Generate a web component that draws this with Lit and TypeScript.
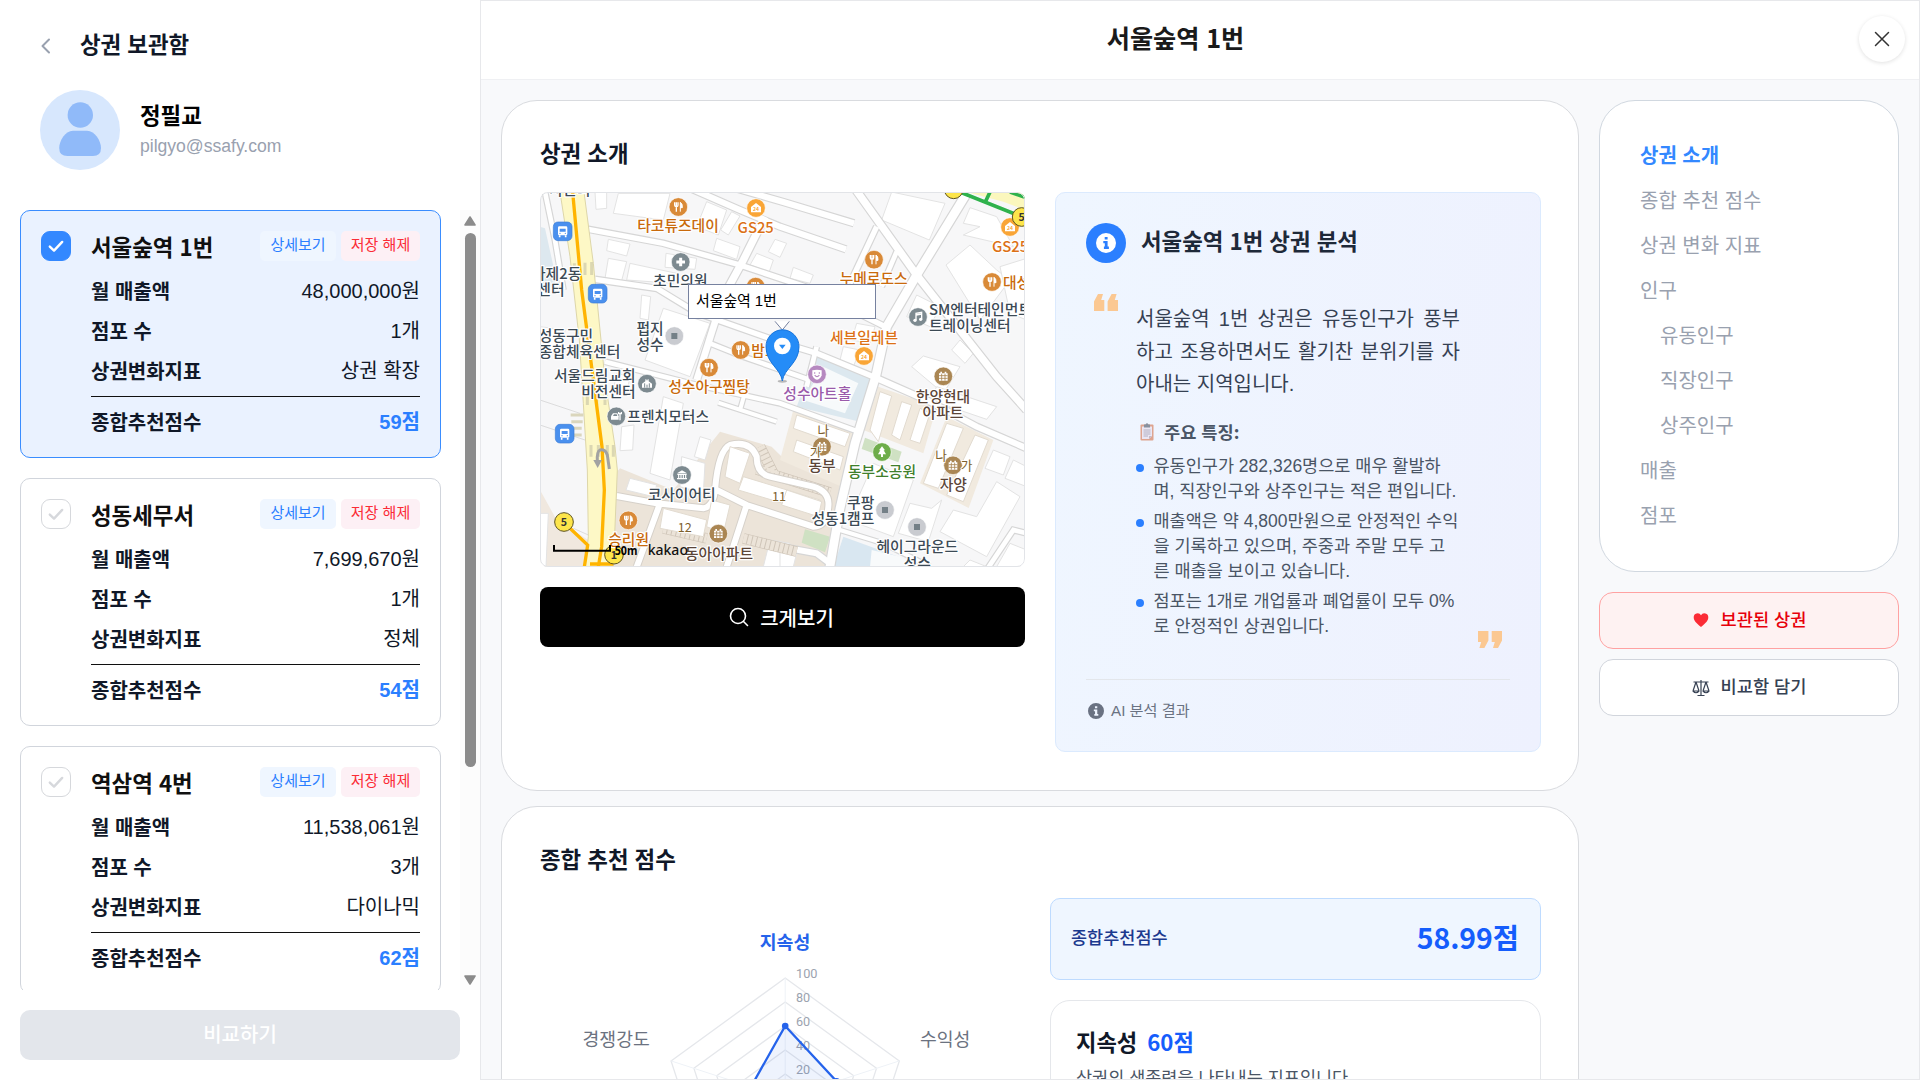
import { LitElement, html, svg, css } from "lit";
import { customElement } from "lit/decorators.js";
import { classMap } from "lit/directives/class-map.js";

interface Area { name: string; sales: string; shops: string; change: string; score: string; on: boolean; }

const AREAS: Area[] = [
  { name: "서울숲역 1번", sales: "48,000,000원", shops: "1개", change: "상권 확장", score: "59점", on: true },
  { name: "성동세무서", sales: "7,699,670원", shops: "1개", change: "정체", score: "54점", on: false },
  { name: "역삼역 4번", sales: "11,538,061원", shops: "3개", change: "다이나믹", score: "62점", on: false },
];

const NAV = [
  { t: "상권 소개", on: true }, { t: "종합 추천 점수" }, { t: "상권 변화 지표" }, { t: "인구" },
  { t: "유동인구", sub: true }, { t: "직장인구", sub: true }, { t: "상주인구", sub: true },
  { t: "매출" }, { t: "점포" },
] as { t: string; on?: boolean; sub?: boolean }[];

const POINTS = [
  ["유동인구가 282,326명으로 매우 활발하", "며, 직장인구와 상주인구는 적은 편입니다."],
  ["매출액은 약 4,800만원으로 안정적인 수익", "을 기록하고 있으며, 주중과 주말 모두 고", "른 매출을 보이고 있습니다."],
  ["점포는 1개로 개업률과 폐업률이 모두 0%", "로 안정적인 상권입니다."],
];

/* Map geometry uses three units per pixel. */
const ROADS: [number, string][] = [
  [14, "M45 36L75 180L100 330"],
  [16, "M175 148L400 190L630 255L830 322L1065 440"],
  [18, "M470 20L630 90L750 140L948 208"],
  [18, "M600 20L760 66L972 130"],
  [22, "M705 110L640 240L580 350"],
  [16, "M195 298L380 325L500 398L760 490L860 520L1030 590"],
  [20, "M560 410L500 600"],
  [14, "M225 545L480 610L750 670L985 755"],
  [14, "M540 490L640 530L840 600"],
  [12, "M565 668L740 725M630 690L650 620"],
  [22, "M978 30L1160 285L1400 590L1490 690"],
  [26, "M1310 40L1160 285L1070 440L1037 590L975 790L930 985L898 1170"],
  [16, "M1040 140L960 310"],
  [14, "M1100 215L1055 320"],
  [18, "M1030 590L1200 665L1340 740L1490 805"],
  [14, "M860 500L830 620"],
  [12, "M930 1050L1060 1090L1200 1160"],
  [14, "M1490 1060L1450 1050L1370 1170"],
  [18, "M750 1100L860 1120L900 1150"],
];
const BUILDINGS = [
  "M195 36H230V85L198 88Z", "M265 40H420L400 120L250 100Z", "M530 65L590 90L565 165L500 140Z", "M605 95L630 108L595 165L572 150Z",
  "M560 175L630 200L620 238L550 212Z", "M735 178L770 190L750 232L715 215Z", "M680 220L730 240L718 275L660 255Z",
  "M235 178L300 192L290 228L230 212Z", "M235 235L290 245L275 302L225 295Z", "M300 250L440 280L430 310L290 300Z", "M408 220L500 235L495 268L405 262Z",
  "M335 345L362 350L355 420L330 415Z", "M400 385L540 430L480 590L345 540Z", "M260 580L300 590L290 640L250 630Z", "M275 740L312 735L308 810L270 812Z",
  "M400 650L460 670L420 900L360 880Z", "M510 770L543 780L525 840L493 830Z", "M455 830L525 850L520 940L450 920Z", "M300 895L380 915L370 950L288 930Z",
  "M1085 36L1245 70L1198 180L1055 120Z", "M1320 83L1400 110L1450 200L1300 165L1350 140L1300 130Z", "M1320 195L1400 270L1440 300L1350 420L1248 255Z",
  "M1410 260L1490 235V420L1440 400Z", "M1160 345L1230 380L1200 440L1130 410Z", "M1290 480L1330 520L1305 550L1265 510Z", "M1180 528L1290 560L1240 640L1145 560Z",
  "M980 430L1035 440L1020 490L965 480Z", "M790 262L850 285L840 310L780 295Z", "M940 500L990 510L970 560L930 540Z", "M1220 620L1400 680L1370 718L1200 660Z",
  "M1400 905L1470 950L1370 1130L1230 1055L1270 990L1340 1010Z", "M1140 970L1205 985L1235 960L1195 1085L1105 1060Z", "M1030 850L1150 900L1090 1070L955 1020Z",
  "M1390 810L1440 830L1420 885L1365 865Z", "M1450 840L1490 860V920L1425 895Z", "M720 1080L780 1090V1160H700Z", "M30 440L105 450L95 520H30Z", "M30 1000L55 1000L48 1160H30Z",
  "M1320 1140L1370 1160H1300Z", "M1440 1090L1490 1110V1160H1400Z", "M750 1110L800 1120L790 1160H750Z",
];
const BLOCKS = [
  "M600 800L660 820L630 910L585 890Z", "M640 890L870 960L860 1000L625 930Z", "M400 985L530 1020L520 1070L390 1045Z", "M545 960L600 975L580 1060L530 1040Z",
  "M1050 635L1085 648L1045 785L1020 750Z", "M1115 665L1145 675L1110 780L1085 765Z", "M1170 685L1200 700L1170 790L1140 780Z",
  "M1250 730L1300 745L1225 925L1180 910Z", "M1335 765L1375 780L1300 965L1250 945Z", "M800 705L960 760L945 800L790 745Z", "M800 780L940 830L930 870L790 815Z",
  "M770 930L875 965L865 1010L755 975Z",
];

type Icon = "food" | "cvs" | "med" | "dot" | "note" | "apt" | "face" | "tree" | "bank" | "car" | "church";
const ICON_COLOR: Record<Icon, string> = {
  food: "#d98a38", cvs: "#f9a536", med: "#7d8a90", dot: "#c9cbd0", note: "#7d8a90", apt: "#aa8653",
  face: "#b689c0", tree: "#6ead4a", bank: "#7d8a90", car: "#7d8a90", church: "#7d8a90",
};
const PLACES: [number, number, Icon][] = [
  [445, 81, "food"], [678, 84, "cvs"], [452, 246, "med"], [677, 320, "food"], [433, 468, "dot"], [632, 510, "food"], [537, 563, "food"],
  [1032, 239, "food"], [1440, 141, "cvs"], [1386, 306, "food"], [1164, 411, "note"], [1002, 528, "cvs"], [861, 583, "face"], [1240, 589, "apt"],
  [351, 611, "church"], [259, 709, "car"], [456, 885, "bank"], [295, 1021, "food"], [565, 1061, "apt"], [876, 800, "apt"], [1056, 816, "tree"],
  [1269, 856, "apt"], [1065, 990, "dot"], [1161, 1041, "dot"],
];
const LABELS: [number, number, string, string, string?][] = [
  [444, 154, "타코튜즈데이", "food"], [677, 158, "GS25", "cvs"], [451, 318, "초민의원", "dark"], [120, 44, "사근터", "dark"],
  [6, 296, "사제2동", "dark", "start"], [22, 344, "센터", "dark", "start"], [26, 482, "성동구민", "dark", "start"], [26, 531, "종합체육센터", "dark", "start"],
  [360, 462, "펍지", "dark"], [360, 510, "성수", "dark"], [664, 528, "밤도깨", "food", "start"], [317, 602, "서울드림교회", "dark", "end"], [317, 652, "비전센터", "dark", "end"],
  [537, 636, "성수아구찜탕", "food"], [292, 727, "프렌치모터스", "dark", "start"], [455, 959, "코사이어티", "dark"], [296, 1095, "승리원", "food"], [567, 1136, "동아아파트", "brown"],
  [1031, 312, "누메로도스", "food"], [1386, 216, "GS25", "cvs", "start"], [1419, 323, "대성갈비", "food", "start"], [1197, 404, "SM엔터테인먼트", "dark", "start"],
  [1197, 453, "트레이닝센터", "dark", "start"], [1002, 490, "세븐일레븐", "cvs"], [862, 658, "성수아트홀", "purple"], [1239, 665, "한양현대", "brown"], [1239, 714, "아파트", "brown"],
  [876, 874, "동부", "brown"], [1056, 892, "동부소공원", "green"], [1270, 930, "자양", "brown"], [1033, 984, "쿠팡", "dark", "end"], [1033, 1033, "성동1캠프", "dark", "end"],
  [1162, 1117, "헤이그라운드", "dark"], [1162, 1166, "성수", "dark"],
];
const SMALL: [number, number, string][] = [[880, 766, "나"], [857, 832, "가"], [1233, 840, "나"], [1310, 869, "가"], [747, 964, "11"], [464, 1055, "12"]];

const glyph = (k: Icon) => {
  switch (k) {
    case "food": return svg`<path d="M-11-14V-5Q-11-1-6-1V14M-6-14V-1M-1-14V-5Q-1-1-6-1" fill="none" stroke="#fff" stroke-width="4"/><path d="M6 14V-14Q13-10 12 2H6" fill="#fff" stroke="#fff" stroke-width="3"/>`;
    case "cvs": return svg`<path d="M-15-3L0-15L15-3V13H-15Z" fill="#fff"/><text y="9" font-size="15" font-weight="700" text-anchor="middle" fill="#f9a536">24</text>`;
    case "med": return svg`<path d="M0-13V13M-13 0H13" stroke="#fff" stroke-width="9"/>`;
    case "dot": return svg`<rect x="-9" y="-9" width="18" height="18" fill="#748087"/>`;
    case "note": return svg`<path d="M-6 9V-11L11-14V6M-6-6L11-9" fill="none" stroke="#fff" stroke-width="4"/><circle cx="-9" cy="10" r="5" fill="#fff"/><circle cx="8" cy="7" r="5" fill="#fff"/>`;
    case "apt": return svg`<path d="M-13-9H-9V-14H-4V-9H4V-14H9V-9H13V13H-13Z" fill="#fff"/><path d="M-13-2H13M-13 6H13M-5-8V13M5-8V13" stroke="#aa8653" stroke-width="2.5"/>`;
    case "face": return svg`<path d="M-14-12Q0-16 14-12V3Q10 15 0 16Q-10 15-14 3Z" fill="#fff"/><path d="M-7 2Q0 12 7 2M-7-6V-2M7-6V-2" fill="none" stroke="#b689c0" stroke-width="3.5"/>`;
    case "tree": return svg`<path d="M0-17L9-5H5L12 7H3V15H-3V7H-12L-5-5H-9Z" fill="#fff"/>`;
    case "bank": return svg`<path d="M-15-5L0-14L15-5Z" fill="#fff"/><path d="M-14-2H14M-10 0V9M-3 0V9M4 0V9M11 0V9M-15 11H15" stroke="#fff" stroke-width="3.5"/>`;
    case "car": return svg`<path d="M-16 10V0L-10-9H3L7 0V10Z" fill="#fff"/><path d="M-10-1L-7-6H1L3-1Z" fill="#7d8a90"/><path d="M11 12V-8M7-13V-8H15V-13" fill="none" stroke="#fff" stroke-width="4"/>`;
    case "church": return svg`<path d="M-15 12V0L-5-7V-13H5V-7L15 0V12Z" fill="#fff"/><path d="M0-18V-10M-3-15H3M-7 12V-1M7 12V-1M0 12V3" stroke="#7d8a90" stroke-width="3"/>`;
  }
};

const info = (cls: string) => html`<svg class=${cls} viewBox="0 0 20 20"><path fill="currentColor" fill-rule="evenodd" d="M10 0a10 10 0 1 0 0 20a10 10 0 0 0 0-20ZM8.7 4h2.9v2.5H8.7ZM7.3 8h4.3v5.6h1.3V16H7.9v-2.4h.9v-3.3H7.3Z"/></svg>`;

@customElement("area-map")
class AreaMap extends LitElement {
  static styles = css`
    :host { display: block; height: 375px; position: relative; box-sizing: border-box; border-radius: 8px; overflow: hidden; }
    :host::after { content: ""; position: absolute; inset: 0; border: 1px solid #e2e4e8; border-radius: 8px; }
    .map { display: block; width: 100%; height: 375px; font-family: "Noto Sans CJK KR", sans-serif; }
    .lb { font-size: 44.400px; font-weight: 500; stroke: #fff; stroke-width: 7px; paint-order: stroke; stroke-linejoin: round; }
    .dark { fill: #3c4a55; } .food { fill: #c96a0c; } .cvs { fill: #dc7116; } .brown { fill: #5b4538; } .purple { fill: #9a5bab; } .green { fill: #3f7f2c; }
    .sm { font-size: 38px; fill: #7d602c; stroke: #fff; stroke-width: 5px; paint-order: stroke; }
    .st { font-size: 32px; font-weight: 700; fill: #333; }
    .kk { font-family: "Noto Sans", sans-serif; font-size: 45px; font-weight: 500; fill: #111; }
    .m50 { font-family: "Noto Sans", sans-serif; font-size: 35px; font-weight: 700; fill: #000; }
    .tip { position: absolute; left: 148px; top: 92px; width: 188px; height: 35px; box-sizing: border-box; border: 1px solid #76819f; background: #fff;
      padding-left: 7px; font: 15px/32px "Liberation Sans", "Noto Sans CJK KR", sans-serif; letter-spacing: -0.1px; color: #000; }
  `;
  render() {
    return html`
      <svg class="map" viewBox="30 36 1455 1125" preserveAspectRatio="none">
        <rect x="30" y="36" width="1455" height="1125" fill="#f7f7f8"/>
        <path d="M30 140L45 145L75 280V320H30Z" fill="#dde8ef"/>
        <path d="M270 865L430 930L570 755L725 800L760 835L950 920L900 1161H240V900Z" fill="#ece4d9"/>
        <path d="M30 930L80 1020L175 1080V1161H30Z" fill="#f0e8df"/>
        <path d="M1045 620L1220 680L1180 820L1000 750ZM1250 710L1390 780L1316 984L1170 910ZM790 690L975 755L935 920L750 840Z" fill="#f1eadf"/>
        <path d="M860 520L1030 600L990 725L800 680L830 600Z" fill="#dce8ef"/>
        <path d="M880 560L985 610L945 700L820 660Z" fill="#f7fafb"/>
        <path d="M940 1070L1190 1161H910Z" fill="#d9e7f1"/>
        <path d="M1025 1110L1110 1130L1180 1161H1020Z" fill="#f8fafb"/>
        <path d="M1005 773L1115 815L1105 847L995 807ZM825 1048L900 1070L885 1117L815 1088Z" fill="#cfe1c3"/>
        ${BUILDINGS.map(d => svg`<path d=${d} fill="#fff" stroke="#e3e3e3" stroke-width="3"/>`)}
        ${ROADS.map(([w, d]) => svg`<path d=${d} fill="none" stroke="#d6d6d6" stroke-width=${w + 7}/>`)}
        ${ROADS.map(([w, d]) => svg`<path d=${d} fill="none" stroke="#fff" stroke-width=${w}/>`)}
        <g fill="none">
          <path d="M680 868L900 938M400 1045L530 1075M640 1075L800 1115M690 800L730 880" stroke="#cfc5b8" stroke-width="32"/>
          <path d="M680 868L900 938M400 1045L530 1075M640 1075L800 1115M690 800L730 880" stroke="#ece4d9" stroke-width="28" stroke-dasharray="11 3"/>
          <path d="M260 948L380 970L520 985Q550 980 555 930Q565 810 600 795Q660 780 680 830Q680 880 720 890L850 920Q900 935 895 980Q890 1040 850 1040L650 975L560 930M650 975L590 1161M390 970L320 1161" stroke="#d6d1ca" stroke-width="24"/>
          <path d="M260 948L380 970L520 985Q550 980 555 930Q565 810 600 795Q660 780 680 830Q680 880 720 890L850 920Q900 935 895 980Q890 1040 850 1040L650 975L560 930M650 975L590 1161M390 970L320 1161" stroke="#fff" stroke-width="18"/>
        </g>
        ${BLOCKS.map(d => svg`<path d=${d} fill="#fff" stroke="#e2dbd0" stroke-width="3"/>`)}
        <path d="M30 660L150 700M30 735L165 780M130 1045L175 1065" stroke="#dcdcdc" stroke-width="3"/>
        <path d="M90 36H162L190 250L225 600L255 800L262 870L250 1161H165L175 1070L172 870L160 670L148 480L120 230Z" fill="#fdf8c6" stroke="#ddd6a9" stroke-width="3"/>
        <g stroke="#d3cfae" stroke-width="9" opacity=".8"><path d="M133 250V285M165 248V285M185 246V285M183 795V830M205 795V830M232 795V830M250 795V830M172 640V675M200 640V675M225 640V675M122 705H160M124 725H158M125 745H155M127 765H155"/></g>
        <path d="M128 36L155 330L190 600L216 800L223 930L215 1100L205 1161M120 1045L173 1095L163 1161M180 1152H250" fill="none" stroke="#ffb400" stroke-width="10"/>
        <path d="M238 867L232 825Q225 805 210 810Q200 815 202 845" fill="none" stroke="#a2a2a2" stroke-width="9"/><path d="M190 840H216L203 864Z" fill="#a2a2a2"/>
        <path d="M1310 36H1485V90L1420 65Z" fill="#fbf7bd"/>
        <path d="M1290 36L1480 112M1380 36L1366 66M1440 36L1485 52" stroke="#2fb24c" stroke-width="11"/>
        ${[[98, 154], [203, 341], [104, 761]].map(([x, y]) => svg`<g transform="translate(${x} ${y})"><rect x="-28" y="-28" width="56" height="56" rx="14" fill="#4a90ee" stroke="#3c7dd6" stroke-width="2"/><rect x="-14" y="-15" width="28" height="27" rx="4" fill="#fff"/><path d="M-9-8H9V1H-9Z" fill="#4a90ee"/><path d="M-9 12V18M9 12V18" stroke="#fff" stroke-width="5"/><circle cx="-8" cy="6" r="2" fill="#4a90ee"/><circle cx="8" cy="6" r="2" fill="#4a90ee"/></g>`)}
        ${PLACES.map(([x, y, k]) => svg`<g transform="translate(${x} ${y})"><circle r="28" fill=${ICON_COLOR[k]} stroke="#fff" stroke-width="2"/>${glyph(k)}</g>`)}
        ${[[102, 1026, "5"], [252, 1124, "1"], [1271, 28, "1"], [1475, 111, "5"]].map(([x, y, t]) => svg`<circle cx=${x} cy=${y} r="28" fill="#fde54b" stroke="#5c5220" stroke-width="3"/><text class="st" x=${x} y=${Number(y) + 12} text-anchor="middle">${t}</text>`)}
        ${SMALL.map(([x, y, t]) => svg`<text class="sm" x=${x} y=${y} text-anchor="middle">${t}</text>`)}
        ${LABELS.map(([x, y, t, c, a]) => svg`<text class="lb ${c}" x=${x} y=${y} text-anchor=${a ?? "middle"}>${t}</text>`)}
        <path d="M72 1095V1112H240V1095" fill="none" stroke="#000" stroke-width="6"/>
        <text class="m50" x="254" y="1126" textLength="68" lengthAdjust="spacingAndGlyphs">50m</text>
        <text class="kk" x="353" y="1125" textLength="121" lengthAdjust="spacingAndGlyphs">kakao</text>
        <path d="M735 424L757 450L778 424" fill="#fff" stroke="#76819f" stroke-width="3"/>
        <ellipse cx="757" cy="604" rx="14" ry="4" fill="#777" opacity=".5"/>
        <path d="M757 603C752 565 708 550 708 500A49 50 0 0 1 807 500C807 550 762 565 757 603Z" fill="#258cf7" stroke="#1875dc" stroke-width="3"/>
        <circle cx="757" cy="498" r="25" fill="#fff"/><path d="M747 494H767L757 507Z" fill="#258cf7"/>
      </svg>
      <div class="tip">서울숲역 1번</div>`;
  }
}

@customElement("score-radar")
class ScoreRadar extends LitElement {
  static styles = css`
    :host { display: block; height: 440px; }
    .chart { display: block; width: 481px; height: 440px; font-family: "Noto Sans CJK KR", sans-serif; }
    .axis { font-size: 18.300px; fill: #6b7280; } .on { fill: #2563eb; font-weight: 700; }
    .tick { font-family: Roboto, sans-serif; font-size: 13.500px; fill: #9ca3af; }
  `;
  private pts(v: number[]) {
    return v.map((p, i) => {
      const a = (i * 72 - 90) * Math.PI / 180;
      return [245.2 + Math.cos(a) * p * 1.2, 200 + Math.sin(a) * p * 1.2];
    });
  }
  render() {
    const data = this.pts([60, 45, 60, 40, 30]);
    const str = (p: number[][]) => p.map(q => q.join(",")).join(" ");
    return html`<svg class="chart" viewBox="0 0 481 440">
      ${[20, 40, 60, 80, 100].map(n => svg`<polygon points=${str(this.pts([n, n, n, n, n]))} fill="none" stroke="#e5e7eb" stroke-width="1.3"/>`)}
      ${this.pts([100, 100, 100, 100, 100]).map(p => svg`<line x1="245.2" y1="200" x2=${p[0]} y2=${p[1]} stroke="#eef2f7"/>`)}
      ${[100, 80, 60, 40, 20].map((n, i) => svg`<text class="tick" x="256" y=${80 + i * 24} textLength=${n === 100 ? 21.5 : 14.2} lengthAdjust="spacingAndGlyphs">${n}</text>`)}
      <polygon points=${str(data)} fill="#2563eb" fill-opacity=".08" stroke="#2563eb" stroke-width="2.3"/>
      ${data.map(p => svg`<circle cx=${p[0]} cy=${p[1]} r="3.3" fill="#2563eb"/>`)}
      <text class="axis on" x="245" y="51" text-anchor="middle">지속성</text>
      <text class="axis" x="76.2" y="148" text-anchor="middle">경쟁강도</text>
      <text class="axis" x="405.2" y="148" text-anchor="middle">수익성</text>
    </svg>`;
  }
}

@customElement("app-root")
class AppRoot extends LitElement {
  static styles = css`
    :host { display: block; width: 1920px; height: 1080px; overflow: hidden; background: #fff; color: #101828;
      font-family: "Liberation Sans", "Noto Sans CJK KR", sans-serif; }
    * { box-sizing: border-box; margin: 0; padding: 0; }
    h1, h2, h3, b { font-family: "Noto Sans CJK KR", sans-serif; font-weight: 700; word-spacing: 1px; }
    svg { display: block; flex: none; }
    .page { display: flex; width: 1920px; height: 1080px; }
    .side { width: 480px; display: flex; flex-direction: column; padding-bottom: 20px; }
    .top { height: 90px; display: flex; align-items: center; padding: 0 0 1px 38px; gap: 27px; }
    .back { width: 15px; height: 20px; color: #99a1af; }
    .top h1 { font-size: 22.4px; line-height: 30px; padding-bottom: 4px; }
    .user { height: 80px; display: flex; align-items: center; gap: 20px; padding-left: 40px; margin-bottom: 40px; }
    .avatar { width: 80px; height: 80px; }
    .who { display: flex; flex-direction: column; gap: 4px; padding-bottom: 1px; }
    .who b { font-size: 22.4px; line-height: 29px; color: #000; }
    .mail { font-size: 17.6px; line-height: 26px; color: #99a1af; letter-spacing: -0.02px; }
    .scroll { height: 780px; display: flex; overflow: hidden; flex: none; margin-bottom: 20px; }
    .list { width: 460px; padding-left: 20px; display: flex; flex-direction: column; gap: 20px; }
    .item { flex: none; width: 421px; height: 248px; border: 1px solid #d1d5dc; border-radius: 10px; background: #fff; display: flex; padding: 20px; gap: 20px; }
    .item.on { background: #eaf2ff; border-color: #3a8dff; }
    .check { width: 30px; height: 30px; border-radius: 9px; border: 1px solid #d6d8dc; color: #d6d8dc; display: grid; place-items: center; flex: none; background: #fff; }
    .on .check { background: #3388ff; border-color: #3388ff; color: #fff; }
    .tick { width: 16px; height: 16px; }
    .info { flex: 1; }
    .head { display: flex; height: 40px; align-items: flex-start; gap: 5px; color: #101010; }
    .head b { flex: 1; font-size: 22.4px; line-height: 31px; height: 36px; white-space: nowrap; }
    .pill { height: 30px; border-radius: 5px; font-size: 15px; line-height: 28px; text-align: center; }
    .see { width: 76px; background: #eff6ff; color: #2b7fff; }
    .del { width: 79px; background: #fdf0f5; color: #fb2c36; }
    .row { height: 40px; line-height: 40px; font-size: 20px; display: flex; justify-content: space-between; white-space: nowrap; }
    .total { margin-top: 5px; height: 50px; line-height: 50px; border-top: 1px solid #101010; }
    .total .val { color: #2b7fff; font-weight: 700; }
    .bar { width: 20px; background: #fcfcfc; height: 780px; display: flex; flex-direction: column; align-items: center; padding: 6px 0 5px; }
    .arrow { width: 12px; height: 10px; }
    .thumb { width: 11px; height: 534px; border-radius: 6px; background: #8b8b8b; margin: 7px 0 auto; }
    .compare { margin: 0 20px; height: 50px; border-radius: 10px; background: #e3e6eb; color: #fff; text-align: center; font: 500 20px/48px "Noto Sans CJK KR", sans-serif; }
    .main { width: 1440px; height: 1080px; border: 1px solid #e7e8eb; background: #f8f9fb; overflow: hidden; }
    .bar-top { height: 79px; background: #fff; border-bottom: 1px solid #eff0f3; display: flex; align-items: center; padding: 0 14px 3px 0; }
    .bar-top h1 { flex: 1; text-align: center; font-size: 25.2px; line-height: 36px; color: #1a1a1a; padding: 0 0 3px 11px; }
    .close { width: 46px; height: 46px; border-radius: 50%; background: #fff; box-shadow: 0 1px 4px rgba(0,0,0,.12); display: grid; place-items: center; color: #333; }
    .x { width: 16px; height: 16px; }
    .cols { display: flex; gap: 20px; padding: 20px 20px 0; align-items: flex-start; }
    .cards { width: 1078px; display: flex; flex-direction: column; gap: 15px; }
    .card { border: 1px solid #d9dbdf; border-radius: 36px; background: #fff; padding: 31px 38px 0; height: 691px; flex: none; }
    .card h2 { font-size: 22.4px; line-height: 40px; height: 42px; }
    .intro { display: grid; grid-template-columns: 485px 486px; gap: 30px; padding-top: 18px; align-items: start; }
    .mapcol { display: flex; flex-direction: column; gap: 20px; }
    .big { height: 60px; border-radius: 8px; background: #000; color: #fff; display: flex; align-items: center; justify-content: center; gap: 11px; padding-right: 2px; font: 500 20px/57px "Noto Sans CJK KR", sans-serif; }
    .lens { width: 20px; height: 20px; }
    .ai { height: 560px; border: 1px solid #dbeafe; border-radius: 10px; background: linear-gradient(100deg, #eff6ff, #eef1fe); padding: 30px 30px 0; }
    .ai-h { display: flex; gap: 15px; align-items: center; height: 40px; }
    .ai-h h3 { font-size: 22.4px; line-height: 36px; height: 42px; color: #1e2939; }
    .ic { width: 40px; height: 40px; border-radius: 50%; background: #2b7fff; display: grid; place-items: center; color: #fff; }
    .i20 { width: 20px; height: 20px; } .i16 { width: 16px; height: 16px; }
    .quote { height: 417px; border-bottom: 1px solid #e3e6eb; padding: 31px 8px 0 8px; display: grid; grid-template-columns: 24px 324px 1fr; column-gap: 18px; }
    .q { width: 24px; height: 17px; }
    .q.end { align-self: end; justify-self: end; margin-bottom: 31px; transform: rotate(180deg); }
    .body { padding-top: 9px; }
    .para { font-size: 20px; line-height: 32.5px; color: #364153; }
    .just { display: block; white-space: nowrap; text-align: justify; text-align-last: justify; }
    .just.last { text-align-last: left; }
    .feat { display: flex; align-items: center; gap: 10px; height: 24px; margin: 19px 0 10px 4px; font-size: 17.6px; color: #4a5565; line-height: 22px; }
    .clip { width: 14px; height: 18px; opacity: .75; }
    .li { display: flex; gap: 9.500px; font-size: 17.5px; line-height: 25px; color: #4a5565; margin-bottom: 5px; white-space: nowrap; }
    .li::before { content: ""; width: 8px; height: 8px; border-radius: 50%; background: #2b7fff; margin-top: 10px; flex: none; }
    .foot { display: flex; align-items: center; gap: 7px; padding: 20px 0 0 2px; font-size: 15.2px; line-height: 22px; color: #6a7282; }
    .score { display: grid; grid-template-columns: 481px 491px; gap: 29px; padding-top: 18px; align-items: start; width: 1001px; }
    .rightcol { display: flex; flex-direction: column; gap: 20px; }
    .sum { height: 82px; border: 1px solid #bedbff; border-radius: 10px; background: #eff6ff; display: flex; align-items: center; justify-content: space-between; padding: 0 21px 4px 20px; }
    .sum span { font: 500 17.5px/28px "Noto Sans CJK KR", sans-serif; color: #1c398e; }
    .sum b { font-size: 28.400px; line-height: 40px; color: #155dfc; }
    .sub { height: 240px; border: 1px solid #e5e7eb; border-radius: 20px; padding: 23px 25px 0; }
    .sub h3 { font-size: 22.2px; line-height: 34px; } .sub h3 em { font-style: normal; color: #155dfc; margin-left: 4px; }
    .desc { font-size: 17.5px; line-height: 28px; color: #4a5565; padding-top: 6px; }
    .right { width: 300px; display: flex; flex-direction: column; gap: 10px; }
    .nav { height: 472px; border: 1px solid #d1d8e0; border-radius: 36px; background: #fff; padding: 33px 40px 0; margin-bottom: 10px; color: #99a1af; font-size: 20px; line-height: 45px; }
    .nav b { color: #3388ff; display: block; height: 45px; line-height: 42px; }
    .nav .s { padding-left: 20px; }
    .btn { height: 57px; border: 1px solid #d1d5dc; border-radius: 14px; background: #fff; display: flex; align-items: center; justify-content: center; gap: 11px; font: 500 17.6px/24px "Noto Sans CJK KR", sans-serif; word-spacing: 1px; color: #364153; }
    .btn span { padding-bottom: 3px; }
    .btn.red { border-color: #ffa2a2; background: #fef2f2; color: #e7000b; }
    .i18 { width: 18px; height: 18px; }
    .heart { padding-bottom: 1px; height: 17px; }
  `;

  private item(a: Area) {
    return html`<div class=${classMap({ item: true, on: a.on })}>
      <div class="check"><svg class="tick" viewBox="0 0 16 16"><path d="M1.8 8.6L6 12.6L14.2 3.9" fill="none" stroke="currentColor" stroke-width="2.4" stroke-linecap="round" stroke-linejoin="round"/></svg></div>
      <div class="info">
        <div class="head"><b>${a.name}</b><span class="pill see">상세보기</span><span class="pill del">저장 해제</span></div>
        <div class="row"><b>월 매출액</b><span>${a.sales}</span></div>
        <div class="row"><b>점포 수</b><span>${a.shops}</span></div>
        <div class="row"><b>상권변화지표</b><span>${a.change}</span></div>
        <div class="row total"><b>종합추천점수</b><span class="val">${a.score}</span></div>
      </div>
    </div>`;
  }

  render() {
    const quote = (c: string) => html`<svg class=${c} viewBox="0 0 24 17"><path d="M4 0H9L7.2 6H10.3V17H0V7.5ZM17.6 0H22.6L20.8 6H24V17H13.6V7.5Z" fill="#fbc892"/></svg>`;
    return html`<div class="page">
      <aside class="side">
        <div class="top">
          <svg class="back" viewBox="0 0 15 20"><path d="M11 4.5L4.5 11L11 17.500" fill="none" stroke="currentColor" stroke-width="2" stroke-linecap="round" stroke-linejoin="round"/></svg>
          <h1>상권 보관함</h1>
        </div>
        <div class="user">
          <svg class="avatar" viewBox="0 0 80 80"><circle cx="40" cy="40" r="40" fill="#d7e7fd"/><circle cx="40.3" cy="25" r="12.7" fill="#90baf9"/><path d="M33 40.7H47C55 40.7 61 51 61 58Q61 66 53 66H27.500Q19.200 66 19.200 58C19.200 51 25 40.700 33 40.700Z" fill="#90baf9"/></svg>
          <div class="who"><b>정필교</b><span class="mail">pilgyo@ssafy.com</span></div>
        </div>
        <div class="scroll">
          <div class="list">${AREAS.map(a => this.item(a))}</div>
          <div class="bar">
            <svg class="arrow" viewBox="0 0 12 10"><path d="M6 1L11 9H1Z" fill="#8b8b8b" stroke="#8b8b8b" stroke-width="1.600" stroke-linejoin="round"/></svg>
            <div class="thumb"></div>
            <svg class="arrow" viewBox="0 0 12 10"><path d="M6 9L11 1H1Z" fill="#8b8b8b" stroke="#8b8b8b" stroke-width="1.600" stroke-linejoin="round"/></svg>
          </div>
        </div>
        <div class="compare">비교하기</div>
      </aside>
      <main class="main">
        <header class="bar-top">
          <h1>서울숲역 1번</h1>
          <div class="close"><svg class="x" viewBox="0 0 16 16"><path d="M1.500 1.500L14.500 14.500M14.500 1.500L1.500 14.500" stroke="currentColor" stroke-width="1.500" stroke-linecap="round"/></svg></div>
        </header>
        <div class="cols">
          <div class="cards">
            <section class="card">
              <h2>상권 소개</h2>
              <div class="intro">
                <div class="mapcol">
                  <area-map></area-map>
                  <div class="big"><svg class="lens" viewBox="0 0 20 20"><circle cx="9" cy="9" r="7.500" fill="none" stroke="#fff" stroke-width="1.600"/><path d="M14.500 14.500L18.500 18.500" stroke="#fff" stroke-width="1.600" stroke-linecap="round"/></svg>크게보기</div>
                </div>
                <div class="ai">
                  <div class="ai-h"><span class="ic">${info("i20")}</span><h3>서울숲역 1번 상권 분석</h3></div>
                  <div class="quote">
                    ${quote("q")}
                    <div class="body">
                      <p class="para"><span class="just">서울숲역 1번 상권은 유동인구가 풍부</span><span class="just">하고 조용하면서도 활기찬 분위기를 자</span><span class="just last">아내는 지역입니다.</span></p>
                      <div class="feat"><svg class="clip" viewBox="0 0 14 18"><rect x=".5" y="1.500" width="13" height="16" rx="1" fill="#d98a6a"/><path d="M2 3.500H12V13L9 16H2Z" fill="#e9e2f0"/><path d="M12 13L9 16V13Z" fill="#b5a7b8"/><path d="M4 1.500H5.500Q7-1 8.500 1.500H10V4.500H4Z" fill="#66707f"/><path d="M3.500 7H10.500M3.500 9H10.500M3.500 11H10.500M3.500 13H8" stroke="#8e8a9c" stroke-width=".8"/></svg><b>주요 특징:</b></div>
                      ${POINTS.map(p => html`<div class="li"><span>${p.map((l, i) => html`${i ? html`<br>` : ""}${l}`)}</span></div>`)}
                    </div>
                    ${quote("q end")}
                  </div>
                  <div class="foot">${info("i16")}<span>AI 분석 결과</span></div>
                </div>
              </div>
            </section>
            <section class="card">
              <h2>종합 추천 점수</h2>
              <div class="score">
                <score-radar></score-radar>
                <div class="rightcol">
                  <div class="sum"><span>종합추천점수</span><b>58.99점</b></div>
                  <div class="sub"><h3>지속성 <em>60점</em></h3><p class="desc">상권의 생존력을 나타내는 지표입니다.</p></div>
                </div>
              </div>
            </section>
          </div>
          <div class="right">
            <nav class="nav">${NAV.map(n => n.on ? html`<b>${n.t}</b>` : html`<div class=${n.sub ? "s" : ""}>${n.t}</div>`)}</nav>
            <div class="btn red"><svg class="i18 heart" viewBox="0 0 18 18"><path d="M9 17C3 12 .8 9.500 .8 6A4.400 4.400 0 0 1 9 3.700A4.400 4.400 0 0 1 17.200 6C17.200 9.500 15 12 9 17Z" fill="#fb2c36"/></svg><span>보관된 상권</span></div>
            <div class="btn"><svg class="i18" viewBox="0 0 18 18"><path d="M1.500 3H16.500M9 1V16.200M5.500 16.500H12.500M4 3L1 12M4 3L7 12M14 3L11 12M14 3L17 12M1 12Q4 15.500 7 12ZM11 12Q14 15.500 17 12Z" fill="none" stroke="currentColor" stroke-width="1.200" stroke-linejoin="round"/></svg><span>비교함 담기</span></div>
          </div>
        </div>
      </main>
    </div>`;
  }
}
